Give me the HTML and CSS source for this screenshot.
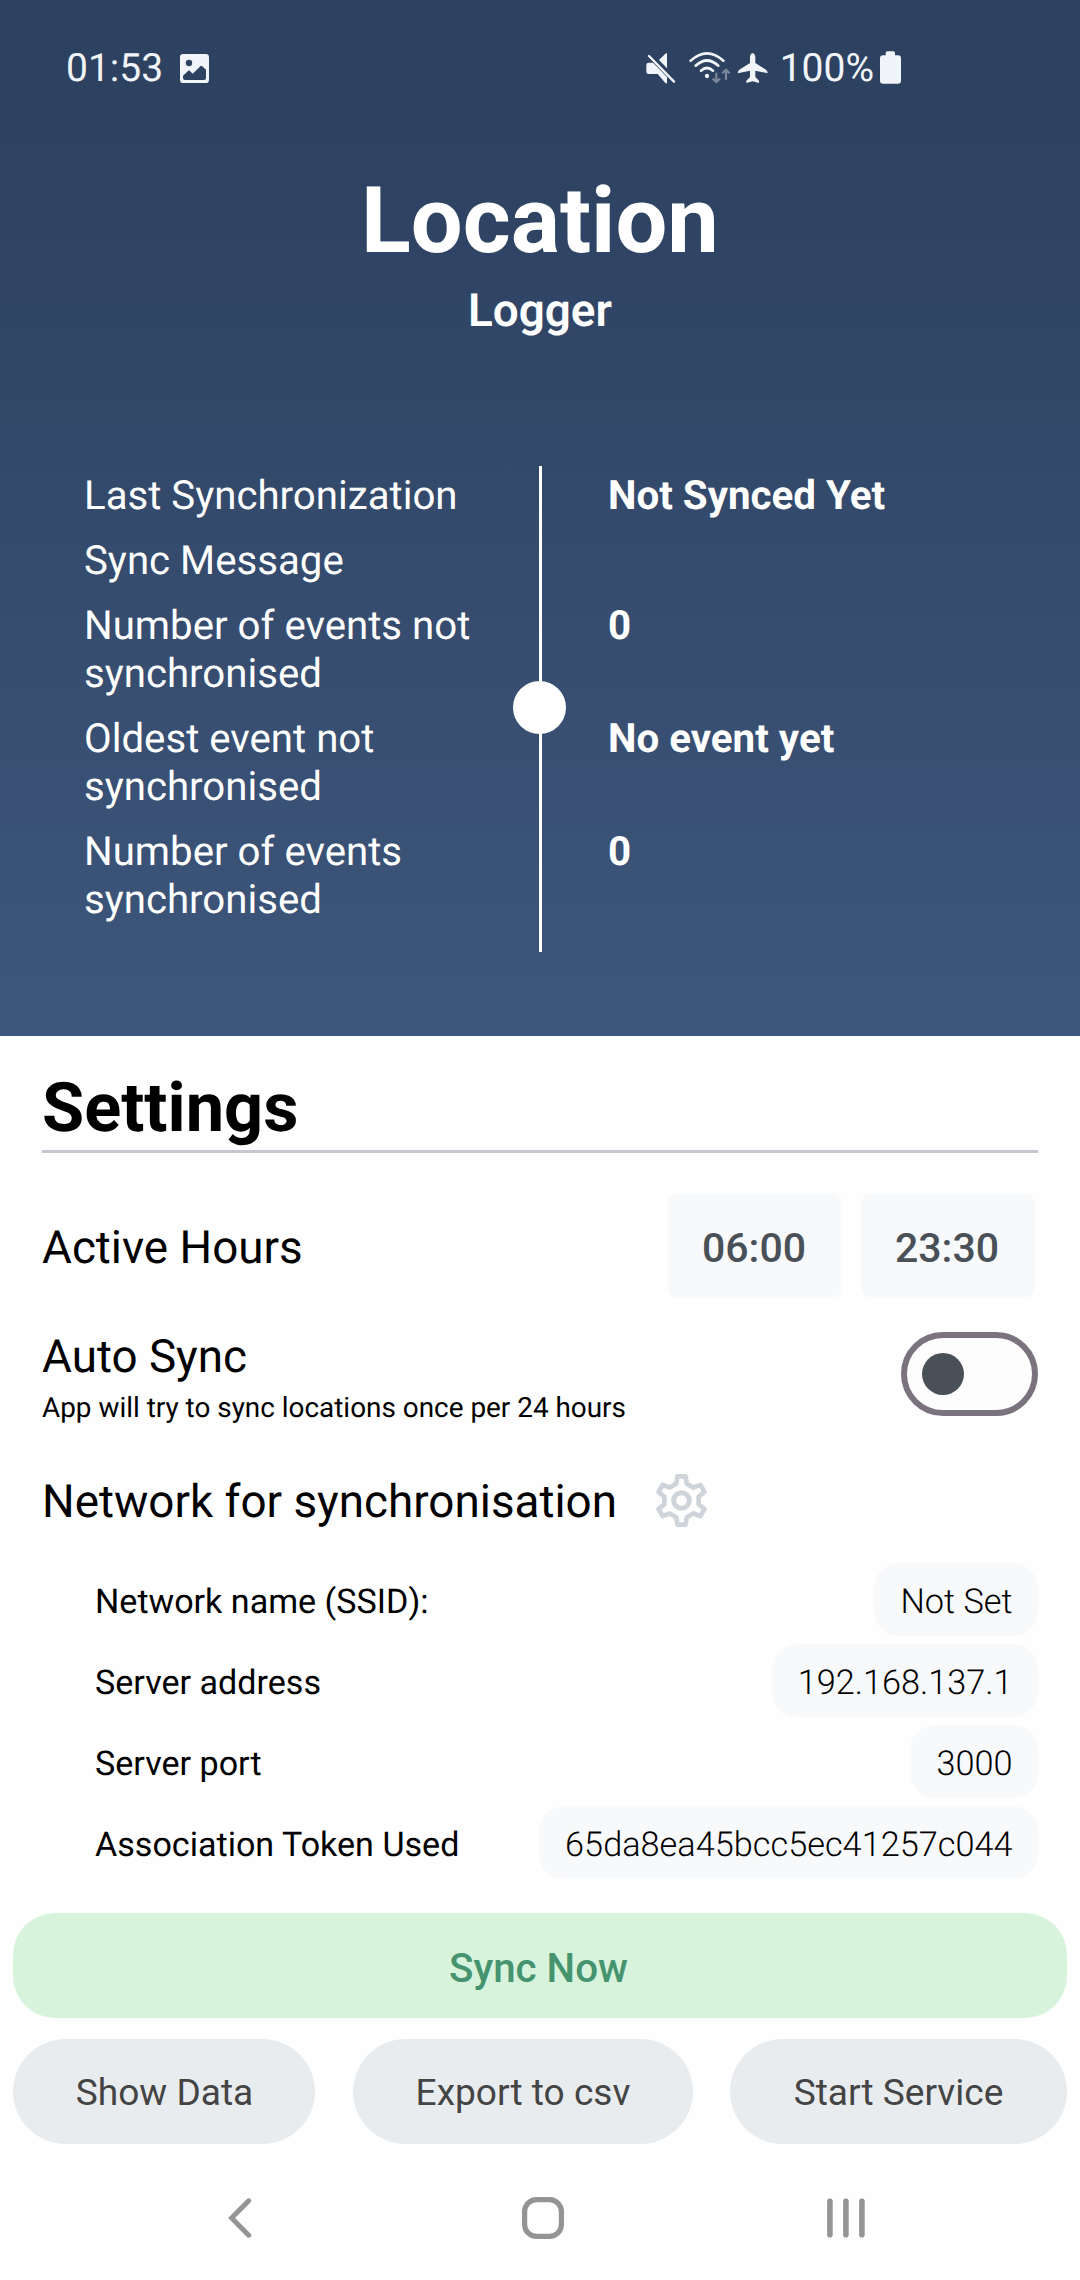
FILE: index.html
```
<!DOCTYPE html>
<html lang="en">
<head>
<meta charset="utf-8">
<title>Location Logger</title>
<link rel="stylesheet" href="styles.css">
</head>
<body>
<header class="hero">
  <div class="status-bar">
    <span class="status-text">01:53</span>
    <svg class="ic-image" width="29" height="33" viewBox="420 63 87 99">
      <rect x="420" y="72" width="87" height="87" rx="10" fill="#f1f4f8"/>
      <circle cx="447" cy="99" r="9.5" fill="#2d4160"/>
      <path d="M429 137l16-15q2-2 4 0l9 9 24-23q2-2 4 0l12 11v25q0 6-6 6h-57q-6 0-6-6z" fill="#2d4160"/>
    </svg>
    <svg class="ic-mute" width="32" height="33" viewBox="75 63 96 99">
      <g fill="#f1f4f8">
        <path d="M86 98h13l42 43v19q-3 1-5-1l-23-27H86q-7 0-7-7v-20q0-7 7-7z"/>
        <path d="M136 71q3-2 5-1v45l-24-25z"/>
      </g>
      <path d="M87 78l75 77" stroke="#f1f4f8" stroke-width="7" stroke-linecap="round"/>
    </svg>
    <svg class="ic-wifi" width="42" height="33" viewBox="207 63 126 99">
      <g fill="none" stroke="#f1f4f8" stroke-width="8" stroke-linecap="round">
        <path d="M212 92Q261 48 310 92"/>
        <path d="M227 107Q261 76 295 107"/>
        <path d="M243 122Q261 106 279 122"/>
      </g>
      <circle cx="261" cy="138" r="6.5" fill="#f1f4f8"/>
      <path d="M289 128v27M278 146l11 10 11-10M318 149v-29M307 130l11-11 11 11" fill="none" stroke="#7b889b" stroke-width="6.5"/>
    </svg>
    <svg class="ic-plane" width="33" height="33" viewBox="348 63 99 99">
      <path d="M398 70c5 0 8 6 8 12v17l32 20q5 3 5 11l-37-8v19l11 11v7l-19-5-19 5v-7l11-11v-19l-37 8q0-8 5-11l32-20V82c0-6 3-12 8-12z" fill="#f1f4f8"/>
    </svg>
    <span class="status-text">100%</span>
    <svg class="ic-battery" width="21" height="33" viewBox="780 63 63 99">
      <rect x="780" y="76" width="63" height="85" rx="9" fill="#f1f4f8"/>
      <rect x="797" y="64" width="28" height="20" rx="5" fill="#f1f4f8"/>
    </svg>
  </div>

  <h1 class="title">Location</h1>
  <p class="subtitle">Logger</p>

  <dl class="stats">
    <div class="stat"><dt>Last Synchronization</dt><dd>Not Synced Yet</dd></div>
    <div class="stat"><dt>Sync Message</dt><dd></dd></div>
    <div class="stat"><dt>Number of events not synchronised</dt><dd>0</dd></div>
    <div class="stat"><dt>Oldest event not synchronised</dt><dd>No event yet</dd></div>
    <div class="stat"><dt>Number of events synchronised</dt><dd>0</dd></div>
    <div class="stats-line"></div>
    <div class="stats-dot"></div>
  </dl>
</header>

<main class="settings">
  <h2 class="settings-title">Settings</h2>

  <div class="row hours">
    <span class="row-label">Active Hours</span>
    <div class="times">
      <button class="time">06:00</button>
      <button class="time">23:30</button>
    </div>
  </div>

  <div class="row auto-sync">
    <div class="auto-text">
      <div class="row-label">Auto Sync</div>
      <div class="hint">App will try to sync locations once per 24 hours</div>
    </div>
    <div class="switch"><div class="thumb"></div></div>
  </div>

  <div class="network">
    <span class="row-label">Network for synchronisation</span>
    <svg class="gear" width="51" height="53" viewBox="48.5 42 153 159">
      <g transform="translate(125 121.5)" fill="none" stroke="#ced4da" stroke-linejoin="round">
        <path stroke-width="14" d="M-12-72.5H12L16-50 35.3-38.9 56.8-46.6 68.8-25.9 51.3-11.1V11.1L68.8 25.9 56.8 46.6 35.3 38.9 16 50 12 72.5H-12L-16 50-35.3 38.9-56.8 46.6-68.8 25.9-51.3 11.1V-11.1L-68.8-25.9-56.8-46.6-35.3-38.9-16-50z"/>
        <circle r="23.5" stroke-width="15"/>
      </g>
    </svg>
  </div>

  <div class="fields">
    <div class="field"><span>Network name (SSID):</span><span class="chip">Not Set</span></div>
    <div class="field"><span>Server address</span><span class="chip">192.168.137.1</span></div>
    <div class="field"><span>Server port</span><span class="chip">3000</span></div>
    <div class="field"><span>Association Token Used</span><span class="chip">65da8ea45bcc5ec41257c044</span></div>
  </div>
</main>

<section class="actions">
  <button class="sync-now">Sync Now</button>
  <div class="action-row">
    <button class="action show">Show Data</button>
    <button class="action export">Export to csv</button>
    <button class="action start">Start Service</button>
  </div>
</section>

<nav class="nav-bar">
  <svg width="24" height="42" viewBox="0 0 24 42"><path d="M20.7 3.8L3.6 21l17.1 17.2" fill="none" stroke="#949494" stroke-width="5" stroke-linecap="round"/></svg>
  <svg width="42" height="42" viewBox="0 0 42 42"><rect x="2.6" y="2.6" width="36.8" height="36.8" rx="12" fill="none" stroke="#949494" stroke-width="5.2"/></svg>
  <svg width="38" height="42" viewBox="0 0 38 42"><path d="M2.9 4.2v33.6M18.9 4.2v33.6M34.9 4.2v33.6" stroke="#949494" stroke-width="5.6" stroke-linecap="round"/></svg>
</nav>
</body>
</html>
```
FILE: styles.css
```
* { box-sizing: border-box; }

body {
  margin: 0;
  width: 1080px;
  height: 2280px;
  overflow: hidden;
  background: #fefefe;
  color: #000;
  font-family: Roboto, "Noto Sans", sans-serif;
  text-rendering: geometricPrecision;
}

h1, h2, p, dl, dd { margin: 0; }
svg { display: block; flex: none; }
button {
  border: 0;
  padding: 0;
  font: inherit;
  color: inherit;
  text-align: center;
}

/* Header */
.hero {
  height: 1036px;
  color: #fff;
  background: linear-gradient(#2d4160 0, #2d4160 100px, #3d567b 1036px);
}

.status-bar {
  display: flex;
  align-items: center;
  height: 135px;
  padding: 0 179px 0 66px;
  color: #f1f4f8;
}
.status-text {
  font-size: 39px;
  line-height: 46px;
}
.ic-image { margin-left: 17px; }
.ic-mute { margin-left: auto; }
.ic-wifi { margin-left: 12px; }
.ic-plane { margin: 0 10.5px 0 5px; }
.ic-battery { margin-left: 6px; }

.title {
  margin-top: 32.5px;
  font-size: 92px;
  font-weight: 700;
  line-height: 108px;
  text-align: center;
}
.subtitle {
  margin-top: 9.5px;
  font-size: 45.8px;
  font-weight: 600;
  line-height: 54px;
  text-align: center;
}

.stats {
  position: relative;
  display: flex;
  flex-direction: column;
  gap: 17px;
  height: 486px;
  margin-top: 127px;
  padding-top: 5.5px;
  font-size: 40.3px;
  line-height: 48px;
}
.stat {
  display: grid;
  grid-template-columns: 524px 1fr;
  column-gap: 84px;
}
.stat dt {
  padding: 0 40px 0 84px;
  font-size: 40.2px;
}
.stat dd { font-weight: 700; }
.stats-line {
  position: absolute;
  top: 0;
  bottom: 0;
  left: 539px;
  width: 3px;
  background: #fff;
}
.stats-dot {
  position: absolute;
  top: 215px;
  left: 513px;
  width: 53px;
  height: 53px;
  border-radius: 50%;
  background: #fff;
}

/* Settings */
.settings { padding: 0 42px; }
.settings-title {
  height: 117px;
  padding-top: 32px;
  border-bottom: 3px solid #cac4d0;
  font-size: 68.5px;
  font-weight: 700;
  line-height: 80px;
}
.row {
  display: flex;
  justify-content: space-between;
}
.row-label {
  font-size: 45.8px;
  line-height: 54px;
}
.hours {
  align-items: center;
  margin-top: 40px;
  padding-right: 3px;
}
.hours .row-label { padding-top: 6px; }
.times { display: flex; gap: 19px; }
.time {
  width: 174px;
  height: 105px;
  padding: 5px 2px 0 0;
  border-radius: 10px;
  background: #f8f9fb;
  color: #495057;
  font-size: 41px;
  font-weight: 500;
}

.auto-sync {
  height: 94px;
  margin-top: 34px;
}
.auto-text { margin-top: -1px; }
.hint {
  margin-top: 4px;
  font-size: 27.9px;
  line-height: 38px;
}
.switch {
  display: flex;
  align-items: center;
  width: 137px;
  height: 84px;
  padding-left: 15px;
  border: 6px solid #7a737e;
  border-radius: 42px;
  background: #fdfdfd;
}
.thumb {
  width: 42px;
  height: 42px;
  border-radius: 50%;
  background: #495057;
}

.network {
  display: flex;
  gap: 39px;
  height: 54px;
  margin-top: 50px;
}
.gear { margin-top: -2px; }

.fields {
  display: flex;
  flex-direction: column;
  gap: 8px;
  margin-top: 33px;
  padding-left: 53px;
  font-size: 34.1px;
}
.field {
  display: flex;
  align-items: center;
  justify-content: space-between;
  height: 73px;
  line-height: 40px;
}
.field > span:first-child { padding-top: 5px; }
.field .chip {
  height: 73px;
  padding: 19px 25.5px 0 26px;
  border-radius: 25px;
  background: #f8f9fb;
  font-size: 34.3px;
  font-weight: 300;
}

/* Buttons */
.actions {
  display: flex;
  flex-direction: column;
  gap: 21px;
  padding: 34px 13px 0;
}
.sync-now {
  height: 105px;
  padding: 5px 3px 0 0;
  border-radius: 42px;
  background: #d8f3dc;
  color: #45936f;
  font-size: 40.3px;
  font-weight: 500;
}
.action-row {
  display: flex;
  justify-content: space-between;
}
.action {
  height: 105px;
  padding-top: 2px;
  border-radius: 53px;
  background: #e9ecef;
  color: #444;
  font-size: 37.1px;
}
.show { width: 302px; padding-left: 1px; }
.export { width: 340px; padding-left: 1px; }
.start { width: 337px; }

/* System navigation */
.nav-bar {
  display: flex;
  justify-content: space-between;
  padding: 53px 215px 0 228px;
}
.nav-bar svg:nth-child(2) { margin-left: 6px; }
```
